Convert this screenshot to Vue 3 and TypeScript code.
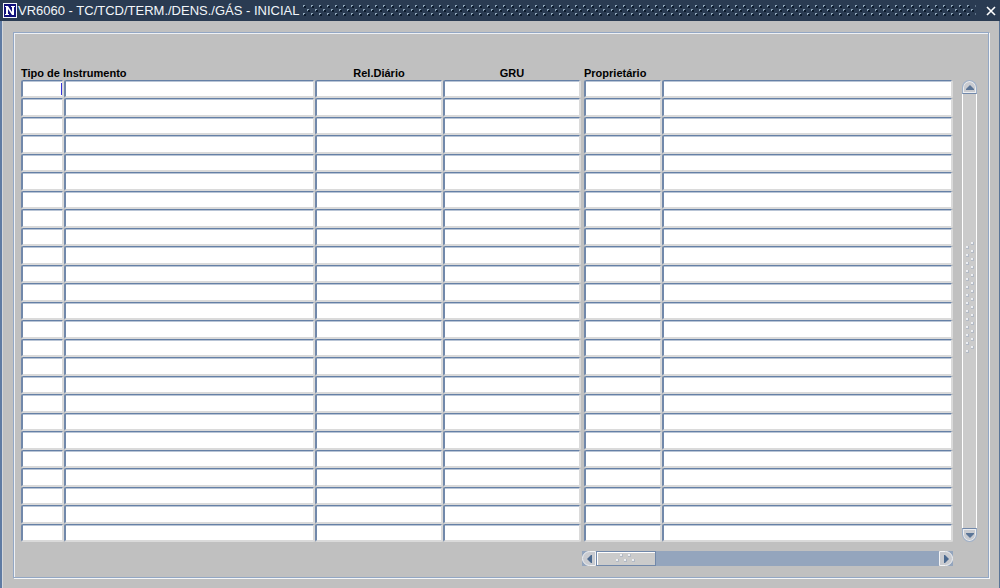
<script setup lang="ts">
import { ref } from 'vue'

interface Column {
  key: string
  label: string
}

const columns: Column[] = [
  { key: 'tipo', label: 'Tipo de Instrumento' },
  { key: 'descricao', label: 'Descrição do instrumento' },
  { key: 'relatorio', label: 'Rel.Diário' },
  { key: 'gru', label: 'GRU' },
  { key: 'proprietario', label: 'Proprietário' },
  { key: 'nome', label: 'Nome do proprietário' },
]

const rows = ref(
  Array.from({ length: 25 }, () => columns.map(() => '')),
)
</script>

<template>
  <main class="window">
    <header class="titlebar">
      <svg class="logo" viewBox="0 0 14 15" aria-hidden="true">
        <path d="M0 0H14V15H0Z" fill="#f4f6fb" />
        <path d="M1 1H13V14H1Z" fill="#10107c" />
        <path d="M2 3H5L9 9V4H8V3H12V4H11V12H9L5 6V11H6V12H2V11H3V4H2Z" fill="#fff" />
      </svg>
      <h1>VR6060 - TC/TCD/TERM./DENS./GÁS - INICIAL</h1>
      <svg class="grip" aria-hidden="true">
        <defs>
          <pattern id="title-dots" width="8" height="8" patternUnits="userSpaceOnUse">
            <path d="M1 1h2v2h-2zM5 5h2v2h-2z" fill="#0c1b2d" />
            <path d="M0 0h2v1h-1v1h-1zM4 4h2v1h-1v1h-1z" fill="#8fa6b9" />
          </pattern>
        </defs>
        <rect width="100%" height="100%" fill="url(#title-dots)" />
      </svg>
      <button class="close" type="button" aria-label="Fechar">
        <svg viewBox="0 0 10 10"><path d="M1 1L9 9M9 1L1 9" stroke="#fff" stroke-width="1.6" /></svg>
      </button>
    </header>

    <section class="canvas">
      <div class="frame">
        <table>
          <thead>
            <tr>
              <th class="wide" colspan="2" scope="colgroup">Tipo de Instrumento</th>
              <th class="mid" scope="col">Rel.Diário</th>
              <th class="mid" scope="col">GRU</th>
              <th class="owner" colspan="2" scope="colgroup">Proprietário</th>
            </tr>
          </thead>
          <tbody>
            <tr v-for="(row, r) in rows" :key="r">
              <td v-for="(column, c) in columns" :key="column.key" :class="column.key">
                <input v-model="row[c]" type="text" :aria-label="`${column.label}, linha ${r + 1}`" />
                <span v-if="r === 0 && c === 0" class="caret"></span>
              </td>
            </tr>
          </tbody>
        </table>

        <div class="vscroll">
          <button class="up" type="button" aria-label="Rolar para cima">
            <svg viewBox="0 0 8 5"><path d="M4 0L8 4V5H0V4Z" fill="#5b7597" /></svg>
          </button>
          <div class="vthumb">
            <svg class="vgrip" aria-hidden="true">
              <defs>
                <pattern id="v-dots" width="10" height="8" patternUnits="userSpaceOnUse">
                  <path d="M1 5h3v3h-3zM6 1h3v3h-3z" fill="#b3bac5" />
                  <path d="M1 5h2v2h-2zM6 1h2v2h-2z" fill="#eceef2" />
                </pattern>
              </defs>
              <rect width="100%" height="100%" fill="url(#v-dots)" />
            </svg>
          </div>
          <button class="down" type="button" aria-label="Rolar para baixo">
            <svg viewBox="0 0 8 5"><path d="M0 0H8V1L4 5L0 1Z" fill="#5b7597" /></svg>
          </button>
        </div>

        <div class="hscroll">
          <button class="left" type="button" aria-label="Rolar para a esquerda">
            <svg viewBox="0 0 5 8"><path d="M5 0V8H4L0 4L4 0Z" fill="#4b698f" /></svg>
          </button>
          <div class="hthumb">
            <svg viewBox="0 0 20 9" aria-hidden="true">
              <path d="M0 5h3v3h-3zM4 0h3v3h-3zM8 5h3v3h-3zM12 0h3v3h-3zM16 5h3v3h-3z" fill="#b3bac5" />
              <path d="M0 5h2v2h-2zM4 0h2v2h-2zM8 5h2v2h-2zM12 0h2v2h-2zM16 5h2v2h-2z" fill="#eceef2" />
            </svg>
          </div>
          <button class="right" type="button" aria-label="Rolar para a direita">
            <svg viewBox="0 0 5 8"><path d="M0 0V8H1L5 4L1 0Z" fill="#4b698f" /></svg>
          </button>
        </div>
      </div>
    </section>
  </main>
</template>

<style scoped>
.window {
  display: flex;
  flex-direction: column;
  box-sizing: border-box;
  min-height: 100vh;
  background: #c0c0c0;
  font-family: "Liberation Sans", Arial, sans-serif;
}

.titlebar {
  display: flex;
  align-items: center;
  height: 21px;
  padding: 0 4px 0 3px;
  background: #2a3b52;
}

.logo {
  flex: none;
  width: 14px;
  height: 15px;
}

h1 {
  margin: 0 4px 0 1px;
  color: #f2f6fa;
  font-size: 13px;
  font-weight: 400;
  line-height: 21px;
  white-space: nowrap;
}

.grip {
  flex: 1;
  min-width: 0;
  height: 12px;
}

button {
  display: flex;
  flex: none;
  align-items: center;
  justify-content: center;
  box-sizing: border-box;
  margin: 0;
  padding: 0;
  border: 0;
  background: #c9cbd0;
}

.close {
  width: 10px;
  height: 16px;
  margin-left: 10px;
  background: none;
}

.close svg {
  width: 10px;
  height: 10px;
}

.canvas {
  display: flex;
  flex: 1;
  padding: 11px 10px 10px 11px;
  border-right: 1px solid #5b7597;
  border-left: 2px solid #5f7ba3;
  box-shadow: inset 1px 0 #d5d8dc;
}

.frame {
  display: grid;
  flex: 1;
  grid-template-columns: minmax(0, 1fr) 15px;
  grid-template-rows: 1fr 15px;
  column-gap: 9px;
  row-gap: 9px;
  padding: 33px 11px 11px 7px;
  border: 1px solid #93a7c4;
  box-shadow: inset 1px 1px #eef1f5, 1px 1px #f4f6f8;
}

table {
  display: flex;
  flex-direction: column;
}

thead {
  display: block;
}

tbody {
  display: grid;
  flex: 1;
  grid-auto-rows: minmax(18px, 1fr);
}

tr {
  display: grid;
  grid-template-columns: 43fr 251fr 128fr 138fr 3fr 78fr 291fr;
}

th {
  padding: 0;
  font-size: 11px;
  line-height: 14px;
  text-align: left;
  white-space: nowrap;
}

.wide {
  grid-column: 1 / 3;
}

.mid {
  text-align: center;
}

.owner {
  grid-column: 6 / 8;
}

td {
  position: relative;
  display: flex;
  min-width: 0;
  padding: 0;
}

.proprietario {
  grid-column: 6;
}

input {
  flex: 1;
  box-sizing: border-box;
  min-width: 0;
  height: 100%;
  margin: 0;
  padding: 0 2px;
  border: 2px solid #dadada;
  border-top: 1px solid #6580a6;
  border-left-color: #7188aa;
  border-radius: 2px;
  outline: 0;
  background: #fff;
  box-shadow: inset 0 1px #b9c5d6;
  font: 11px "Liberation Sans", Arial, sans-serif;
}

.caret {
  position: absolute;
  top: 3px;
  right: 2px;
  bottom: 3px;
  width: 1px;
  background: #3434d8;
}

.vscroll {
  display: flex;
  flex-direction: column;
  margin-top: 14px;
}

.up,
.down {
  height: 14px;
  border: 1px solid #9fb0c8;
  box-shadow: inset 0 0 0 1px #eceef1;
}

.up {
  border-radius: 8px 8px 0 0;
  border-bottom-color: #7188aa;
}

.down {
  border-radius: 0 0 8px 8px;
  border-top-color: #7188aa;
}

.up svg,
.down svg {
  width: 8px;
  height: 5px;
}

.vthumb {
  display: flex;
  flex: 1;
  align-items: center;
  justify-content: center;
  padding-bottom: 28px;
  border-right: 1px solid #fff;
  border-left: 1px solid #fff;
  background: #cbcbcb;
}

.vgrip {
  width: 10px;
  height: 112px;
}

.hscroll {
  display: flex;
  grid-column: 1;
  width: 371px;
  margin-left: auto;
  background: #94a5bd;
}

.left,
.right {
  width: 14px;
  border: 1px solid #f2f3f5;
}

.left {
  border-radius: 8px 0 0 8px;
}

.right {
  margin-left: auto;
  border-radius: 0 8px 8px 0;
}

.left svg,
.right svg {
  width: 5px;
  height: 8px;
}

.hthumb {
  display: flex;
  align-items: center;
  justify-content: center;
  box-sizing: border-box;
  width: 60px;
  border: 1px solid #7188aa;
  background: #cbcbcb;
  box-shadow: inset 1px 1px #fff;
}

.hthumb svg {
  width: 20px;
  height: 9px;
}
</style>

<style>
body {
  margin: 0;
  background: #c0c0c0;
}
</style>
